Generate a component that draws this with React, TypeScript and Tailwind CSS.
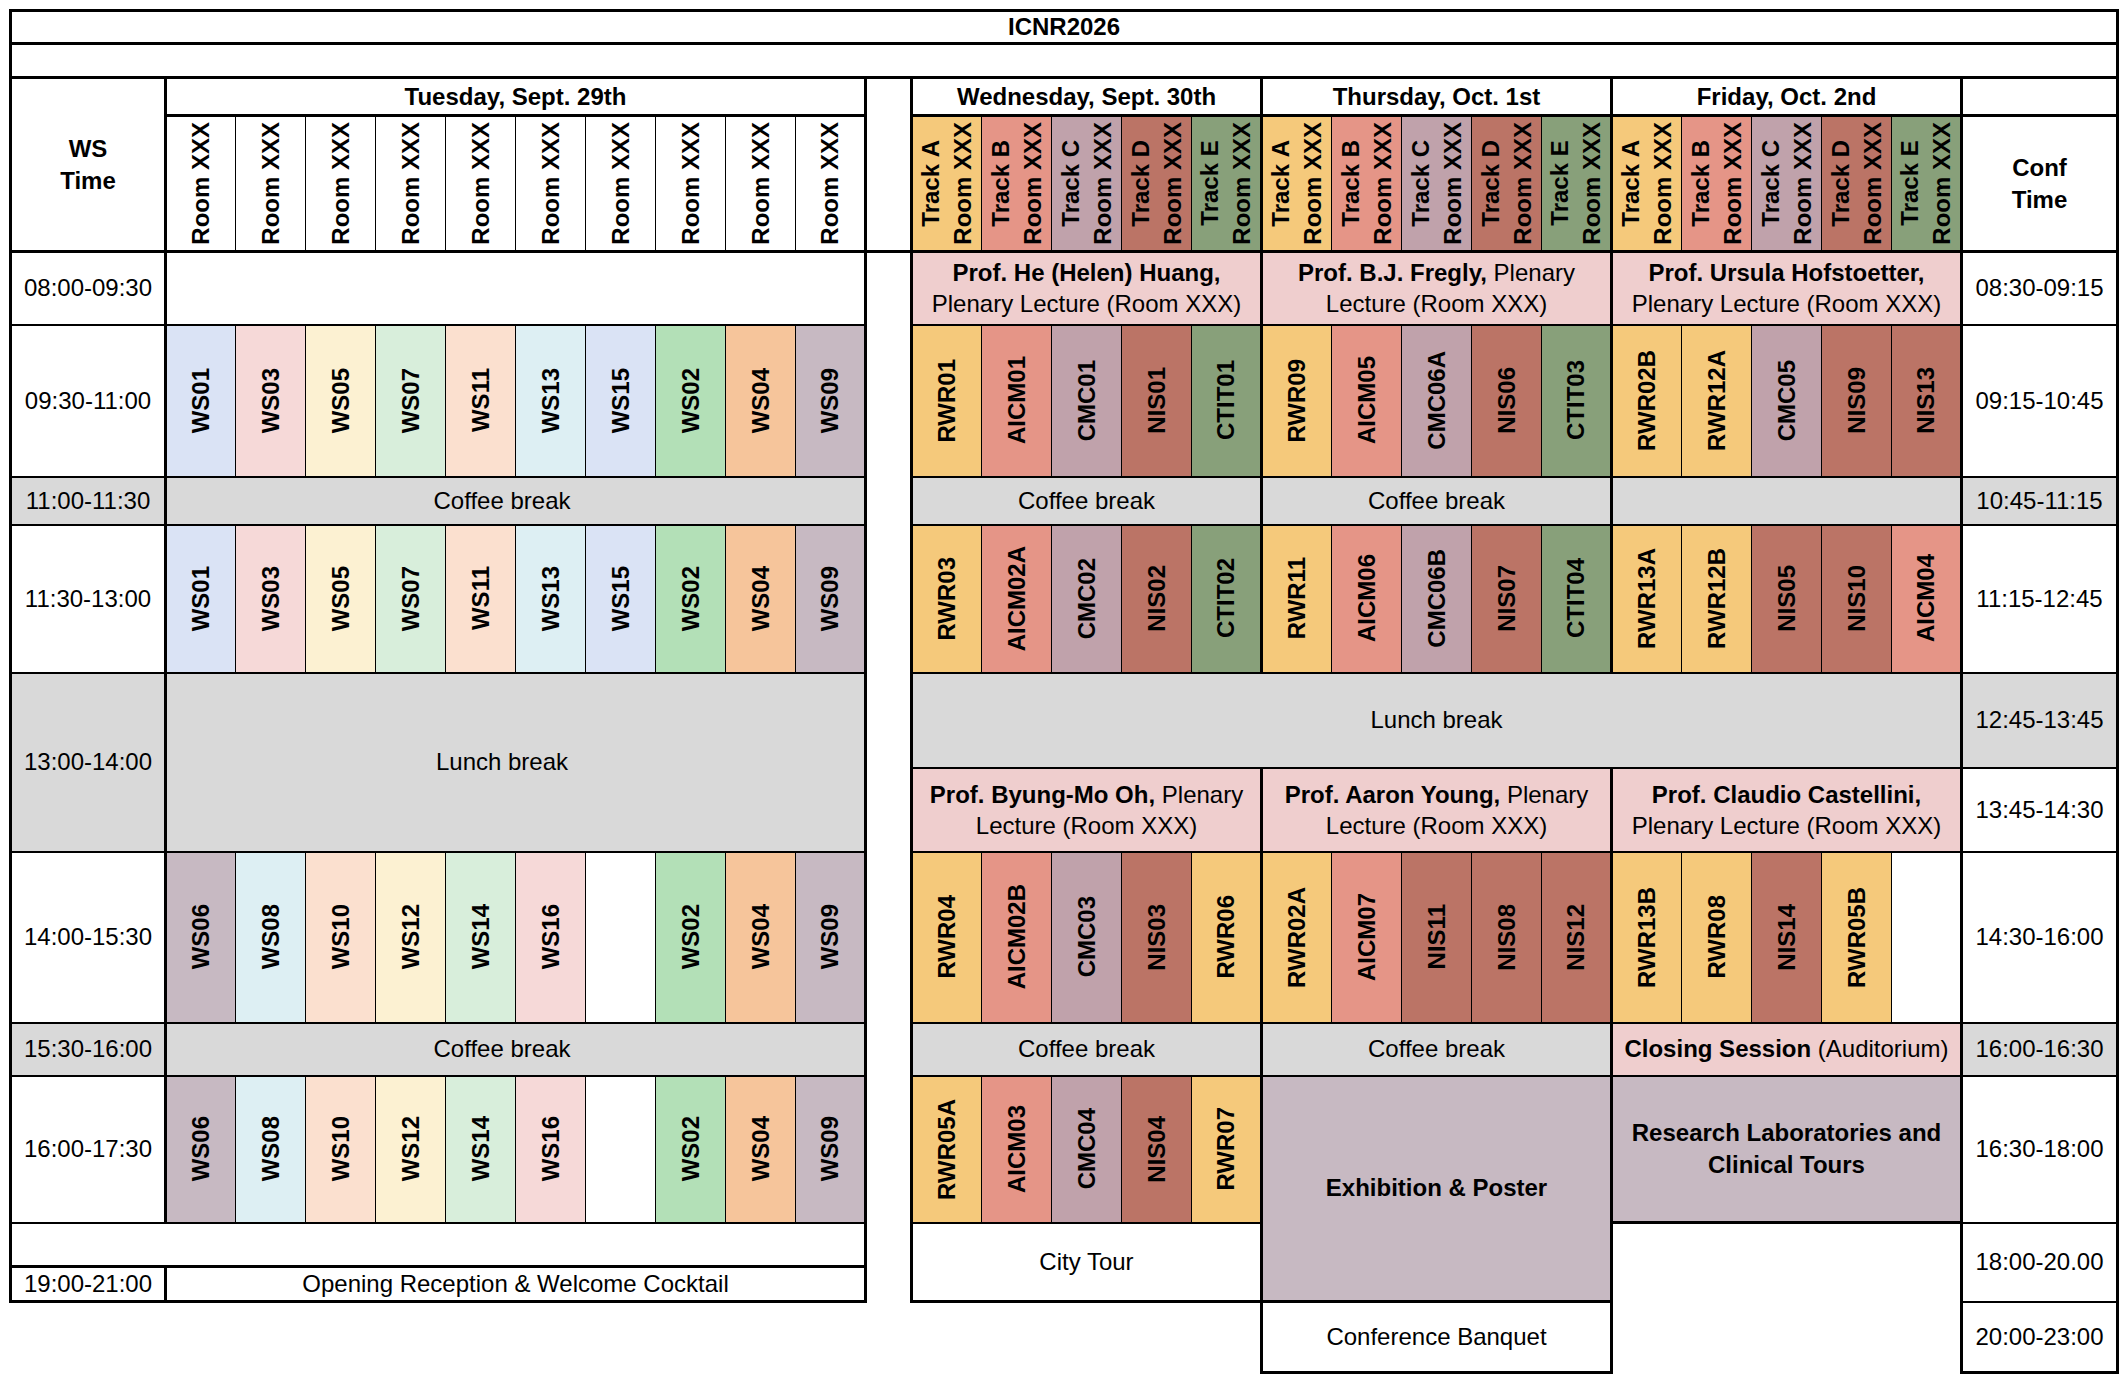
import React from "react";

type S = { t: string; c: string };

const GRAY = "bg-[#d9d9d9]";
const PINK = "bg-[#efcece]";
const MAUVE = "bg-[#c7b9c2]";

const TA = "bg-[#f5c97b]";
const TB = "bg-[#e59587]";
const TC = "bg-[#c0a2ab]";
const TD = "bg-[#bb7466]";
const TE = "bg-[#88a07a]";

const W_BLUE = "bg-[#dae3f5]";
const W_PINK = "bg-[#f6d9d8]";
const W_YEL = "bg-[#fcf1d2]";
const W_GRN = "bg-[#d8eedb]";
const W_PEA = "bg-[#fbe0cf]";
const W_CYA = "bg-[#ddeff3]";
const W_GR2 = "bg-[#b3e0b7]";
const W_ORA = "bg-[#f6c59b]";
const W_MAU = "bg-[#c7b9c2]";
const WHITE = "bg-white";

const tueA: S[] = [
  { t: "WS01", c: W_BLUE },
  { t: "WS03", c: W_PINK },
  { t: "WS05", c: W_YEL },
  { t: "WS07", c: W_GRN },
  { t: "WS11", c: W_PEA },
  { t: "WS13", c: W_CYA },
  { t: "WS15", c: W_BLUE },
  { t: "WS02", c: W_GR2 },
  { t: "WS04", c: W_ORA },
  { t: "WS09", c: W_MAU },
];
const tueB: S[] = [
  { t: "WS06", c: W_MAU },
  { t: "WS08", c: W_CYA },
  { t: "WS10", c: W_PEA },
  { t: "WS12", c: W_YEL },
  { t: "WS14", c: W_GRN },
  { t: "WS16", c: W_PINK },
  { t: "", c: WHITE },
  { t: "WS02", c: W_GR2 },
  { t: "WS04", c: W_ORA },
  { t: "WS09", c: W_MAU },
];

const r5: S[][] = [
  [
    { t: "RWR01", c: TA },
    { t: "AICM01", c: TB },
    { t: "CMC01", c: TC },
    { t: "NIS01", c: TD },
    { t: "CTIT01", c: TE },
  ],
  [
    { t: "RWR09", c: TA },
    { t: "AICM05", c: TB },
    { t: "CMC06A", c: TC },
    { t: "NIS06", c: TD },
    { t: "CTIT03", c: TE },
  ],
  [
    { t: "RWR02B", c: TA },
    { t: "RWR12A", c: TA },
    { t: "CMC05", c: TC },
    { t: "NIS09", c: TD },
    { t: "NIS13", c: TD },
  ],
];
const r7: S[][] = [
  [
    { t: "RWR03", c: TA },
    { t: "AICM02A", c: TB },
    { t: "CMC02", c: TC },
    { t: "NIS02", c: TD },
    { t: "CTIT02", c: TE },
  ],
  [
    { t: "RWR11", c: TA },
    { t: "AICM06", c: TB },
    { t: "CMC06B", c: TC },
    { t: "NIS07", c: TD },
    { t: "CTIT04", c: TE },
  ],
  [
    { t: "RWR13A", c: TA },
    { t: "RWR12B", c: TA },
    { t: "NIS05", c: TD },
    { t: "NIS10", c: TD },
    { t: "AICM04", c: TB },
  ],
];
const r10: S[][] = [
  [
    { t: "RWR04", c: TA },
    { t: "AICM02B", c: TB },
    { t: "CMC03", c: TC },
    { t: "NIS03", c: TD },
    { t: "RWR06", c: TA },
  ],
  [
    { t: "RWR02A", c: TA },
    { t: "AICM07", c: TB },
    { t: "NIS11", c: TD },
    { t: "NIS08", c: TD },
    { t: "NIS12", c: TD },
  ],
  [
    { t: "RWR13B", c: TA },
    { t: "RWR08", c: TA },
    { t: "NIS14", c: TD },
    { t: "RWR05B", c: TA },
    { t: "", c: WHITE },
  ],
];
const r12wed: S[] = [
  { t: "RWR05A", c: TA },
  { t: "AICM03", c: TB },
  { t: "CMC04", c: TC },
  { t: "NIS04", c: TD },
  { t: "RWR07", c: TA },
];

const tracks: S[] = [
  { t: "A", c: TA },
  { t: "B", c: TB },
  { t: "C", c: TC },
  { t: "D", c: TD },
  { t: "E", c: TE },
];

// wide cell: thick sides, 2px top/bottom
const WIDE = "border-l-[3px] border-r-[3px] border-t-2 border-b-2 border-black p-0 text-center align-middle leading-[26px]";

function VText({ children }: { children: React.ReactNode }) {
  return (
    <div className="flex justify-center">
      <div className="[writing-mode:vertical-rl] rotate-180 whitespace-nowrap text-center font-bold leading-[32px]">
        {children}
      </div>
    </div>
  );
}

function SessRow({ items }: { items: S[] }) {
  return (
    <>
      {items.map((s, i) => (
        <td
          key={i}
          className={
            s.c +
            " " +
            (i === 0 ? "border-l-[3px]" : "border-l") +
            " " +
            (i === items.length - 1 ? "border-r-[3px]" : "border-r") +
            " border-t-2 border-b-2 border-black p-0 text-center align-middle"
          }
        >
          {s.t ? <VText>{s.t}</VText> : null}
        </td>
      ))}
    </>
  );
}

function Time({ t, gray, rowSpan, extra }: { t: string; gray?: boolean; rowSpan?: number; extra?: string }) {
  return (
    <td rowSpan={rowSpan} className={WIDE + " whitespace-nowrap " + (gray ? GRAY : "bg-white") + (extra ? " " + extra : "")}>
      {t}
    </td>
  );
}

function Plenary({ name, rest, line1Rest }: { name: string; rest: string; line1Rest?: string }) {
  return (
    <td colSpan={5} className={WIDE + " " + PINK + " leading-[31px] whitespace-nowrap"}>
      <b>{name}</b>
      {line1Rest ? " " + line1Rest : ""}
      <br />
      {rest}
    </td>
  );
}

export default function App() {
  return (
    <div className="min-h-screen w-[2128px] bg-white pl-[9px] pt-[9px] text-black font-['Liberation_Sans',Arial,sans-serif]">
      <table className="w-[2110px] table-fixed border-collapse text-[24px]">
        <colgroup>
          <col className="w-[155px]" />
          <col className="w-[70px]" />
          <col className="w-[70px]" />
          <col className="w-[70px]" />
          <col className="w-[70px]" />
          <col className="w-[70px]" />
          <col className="w-[70px]" />
          <col className="w-[70px]" />
          <col className="w-[70px]" />
          <col className="w-[70px]" />
          <col className="w-[70px]" />
          <col className="w-[46px]" />
          <col className="w-[70px]" />
          <col className="w-[70px]" />
          <col className="w-[70px]" />
          <col className="w-[70px]" />
          <col className="w-[70px]" />
          <col className="w-[70px]" />
          <col className="w-[70px]" />
          <col className="w-[70px]" />
          <col className="w-[70px]" />
          <col className="w-[70px]" />
          <col className="w-[70px]" />
          <col className="w-[70px]" />
          <col className="w-[70px]" />
          <col className="w-[70px]" />
          <col className="w-[70px]" />
          <col className="w-[156px]" />
        </colgroup>
        <tbody>
          {/* r0 title */}
          <tr className="h-[33px]">
            <td colSpan={28} className="border-[3px] border-black p-0 text-center align-middle font-bold leading-[26px]">
              ICNR2026
            </td>
          </tr>
          {/* r1 blank */}
          <tr className="h-[34px]">
            <td colSpan={28} className="border-[3px] border-black p-0" />
          </tr>
          {/* r2 day header */}
          <tr className="h-[38px]">
            <td rowSpan={2} className="border-[3px] border-black p-0 text-center align-middle font-bold leading-[32px]">
              WS
              <br />
              Time
            </td>
            <td colSpan={10} className="border-[3px] border-black p-0 text-center align-middle font-bold leading-[26px] whitespace-nowrap">
              Tuesday, Sept. 29th
            </td>
            <td rowSpan={2} className="border-l-[3px] border-r-[3px] border-b-[3px] border-black p-0" />
            <td colSpan={5} className="border-[3px] border-black p-0 text-center align-middle font-bold leading-[26px] whitespace-nowrap">
              Wednesday, Sept. 30th
            </td>
            <td colSpan={5} className="border-[3px] border-black p-0 text-center align-middle font-bold leading-[26px] whitespace-nowrap">
              Thursday, Oct. 1st
            </td>
            <td colSpan={5} className="border-[3px] border-black p-0 text-center align-middle font-bold leading-[26px] whitespace-nowrap">
              Friday, Oct. 2nd
            </td>
            <td className="border-[3px] border-black p-0" />
          </tr>
          {/* r3 rooms */}
          <tr className="h-[136px]">
            {Array.from({ length: 10 }).map((_, i) => (
              <td
                key={i}
                className={
                  (i === 0 ? "border-l-[3px]" : "border-l") +
                  " " +
                  (i === 9 ? "border-r-[3px]" : "border-r") +
                  " border-t-[3px] border-b-[3px] border-black p-0 pb-[5px] text-center align-bottom"
                }
              >
                <VText>Room XXX</VText>
              </td>
            ))}
            {[0, 1, 2].map((d) =>
              tracks.map((tr, i) => (
                <td
                  key={d + "-" + i}
                  className={
                    tr.c +
                    " " +
                    (i === 0 ? "border-l-[3px]" : "border-l") +
                    " " +
                    (i === 4 ? "border-r-[3px]" : "border-r") +
                    " border-t-[3px] border-b-[3px] border-black p-0 pb-[5px] text-center align-bottom"
                  }
                >
                  <VText>
                    Track {tr.t}
                    <br />
                    Room XXX
                  </VText>
                </td>
              ))
            )}
            <td className="border-[3px] border-black p-0 text-center align-middle font-bold leading-[32px]">
              Conf
              <br />
              Time
            </td>
          </tr>
          {/* r4 */}
          <tr className="h-[73px]">
            <Time t="08:00-09:30" />
            <td colSpan={10} className={WIDE + " bg-white"} />
            <td rowSpan={12} className="p-0" />
            <Plenary name="Prof. He (Helen) Huang," rest="Plenary Lecture (Room XXX)" />
            <Plenary name="Prof. B.J. Fregly," line1Rest="Plenary" rest="Lecture (Room XXX)" />
            <Plenary name="Prof. Ursula Hofstoetter," rest="Plenary Lecture (Room XXX)" />
            <Time t="08:30-09:15" />
          </tr>
          {/* r5 */}
          <tr className="h-[152px]">
            <Time t="09:30-11:00" />
            <SessRow items={tueA} />
            <SessRow items={r5[0]} />
            <SessRow items={r5[1]} />
            <SessRow items={r5[2]} />
            <Time t="09:15-10:45" />
          </tr>
          {/* r6 */}
          <tr className="h-[48px]">
            <Time t="11:00-11:30" gray />
            <td colSpan={10} className={WIDE + " " + GRAY + " pr-[27px]"}>
              Coffee break
            </td>
            <td colSpan={5} className={WIDE + " " + GRAY}>
              Coffee break
            </td>
            <td colSpan={5} className={WIDE + " " + GRAY}>
              Coffee break
            </td>
            <td colSpan={5} className={WIDE + " " + GRAY} />
            <Time t="10:45-11:15" gray />
          </tr>
          {/* r7 */}
          <tr className="h-[148px]">
            <Time t="11:30-13:00" />
            <SessRow items={tueA} />
            <SessRow items={r7[0]} />
            <SessRow items={r7[1]} />
            <SessRow items={r7[2]} />
            <Time t="11:15-12:45" />
          </tr>
          {/* r8 */}
          <tr className="h-[95px]">
            <Time t="13:00-14:00" gray rowSpan={2} />
            <td colSpan={10} rowSpan={2} className={WIDE + " " + GRAY + " pr-[27px]"}>
              Lunch break
            </td>
            <td colSpan={15} className={WIDE + " " + GRAY}>
              Lunch break
            </td>
            <Time t="12:45-13:45" gray />
          </tr>
          {/* r9 */}
          <tr className="h-[84px]">
            <Plenary name="Prof. Byung-Mo Oh," line1Rest="Plenary" rest="Lecture (Room XXX)" />
            <Plenary name="Prof. Aaron Young," line1Rest="Plenary" rest="Lecture (Room XXX)" />
            <Plenary name="Prof. Claudio Castellini," rest="Plenary Lecture (Room XXX)" />
            <Time t="13:45-14:30" />
          </tr>
          {/* r10 */}
          <tr className="h-[171px]">
            <Time t="14:00-15:30" />
            <SessRow items={tueB} />
            <SessRow items={r10[0]} />
            <SessRow items={r10[1]} />
            <SessRow items={r10[2]} />
            <Time t="14:30-16:00" />
          </tr>
          {/* r11 */}
          <tr className="h-[53px]">
            <Time t="15:30-16:00" gray />
            <td colSpan={10} className={WIDE + " " + GRAY + " pr-[27px]"}>
              Coffee break
            </td>
            <td colSpan={5} className={WIDE + " " + GRAY}>
              Coffee break
            </td>
            <td colSpan={5} className={WIDE + " " + GRAY}>
              Coffee break
            </td>
            <td colSpan={5} className={WIDE + " " + PINK + " whitespace-nowrap"}>
              <b>Closing Session</b> (Auditorium)
            </td>
            <Time t="16:00-16:30" gray />
          </tr>
          {/* r12 */}
          <tr className="h-[147px]">
            <Time t="16:00-17:30" />
            <SessRow items={tueB} />
            <SessRow items={r12wed} />
            <td
              colSpan={5}
              rowSpan={3}
              className="border-l-[3px] border-r-[3px] border-t-2 border-b-[3px] border-black p-0 text-center align-middle font-bold leading-[26px] bg-[#c7b9c2] whitespace-nowrap"
            >
              Exhibition &amp; Poster
            </td>
            <td
              colSpan={5}
              className={"border-l-[3px] border-r-[3px] border-t-2 border-b-[3px] border-black p-0 text-center align-middle font-bold leading-[32px] whitespace-nowrap " + MAUVE}
            >
              Research Laboratories and
              <br />
              Clinical Tours
            </td>
            <Time t="16:30-18:00" />
          </tr>
          {/* r13 */}
          <tr className="h-[44px]">
            <td colSpan={11} className="border-l-[3px] border-r-[3px] border-t-2 border-b-[3px] border-black p-0" />
            <td
              colSpan={5}
              rowSpan={2}
              className="border-l-[3px] border-r-[3px] border-t-2 border-b-[3px] border-black p-0 text-center align-middle leading-[26px] bg-white"
            >
              City Tour
            </td>
            <td colSpan={5} rowSpan={3} className="p-0" />
            <Time t="18:00-20.00" rowSpan={2} />
          </tr>
          {/* r14 */}
          <tr className="h-[35px]">
            <td className="border-l-[3px] border-r-[3px] border-t-[3px] border-b-[3px] border-black p-0 text-center align-middle leading-[26px] whitespace-nowrap">
              19:00-21:00
            </td>
            <td
              colSpan={10}
              className="border-l-[3px] border-r-[3px] border-t-[3px] border-b-[3px] border-black p-0 text-center align-middle leading-[26px] whitespace-nowrap"
            >
              Opening Reception &amp; Welcome Cocktail
            </td>
          </tr>
          {/* r15 */}
          <tr className="h-[71px]">
            <td colSpan={11} className="p-0" />
            <td colSpan={5} className="p-0" />
            <td
              colSpan={5}
              className="border-l-[3px] border-r-[3px] border-t-[3px] border-b-[3px] border-black p-0 text-center align-middle leading-[26px] bg-white whitespace-nowrap"
            >
              Conference Banquet
            </td>
            <Time t="20:00-23:00" extra="border-b-[3px]" />
          </tr>
        </tbody>
      </table>
    </div>
  );
}
